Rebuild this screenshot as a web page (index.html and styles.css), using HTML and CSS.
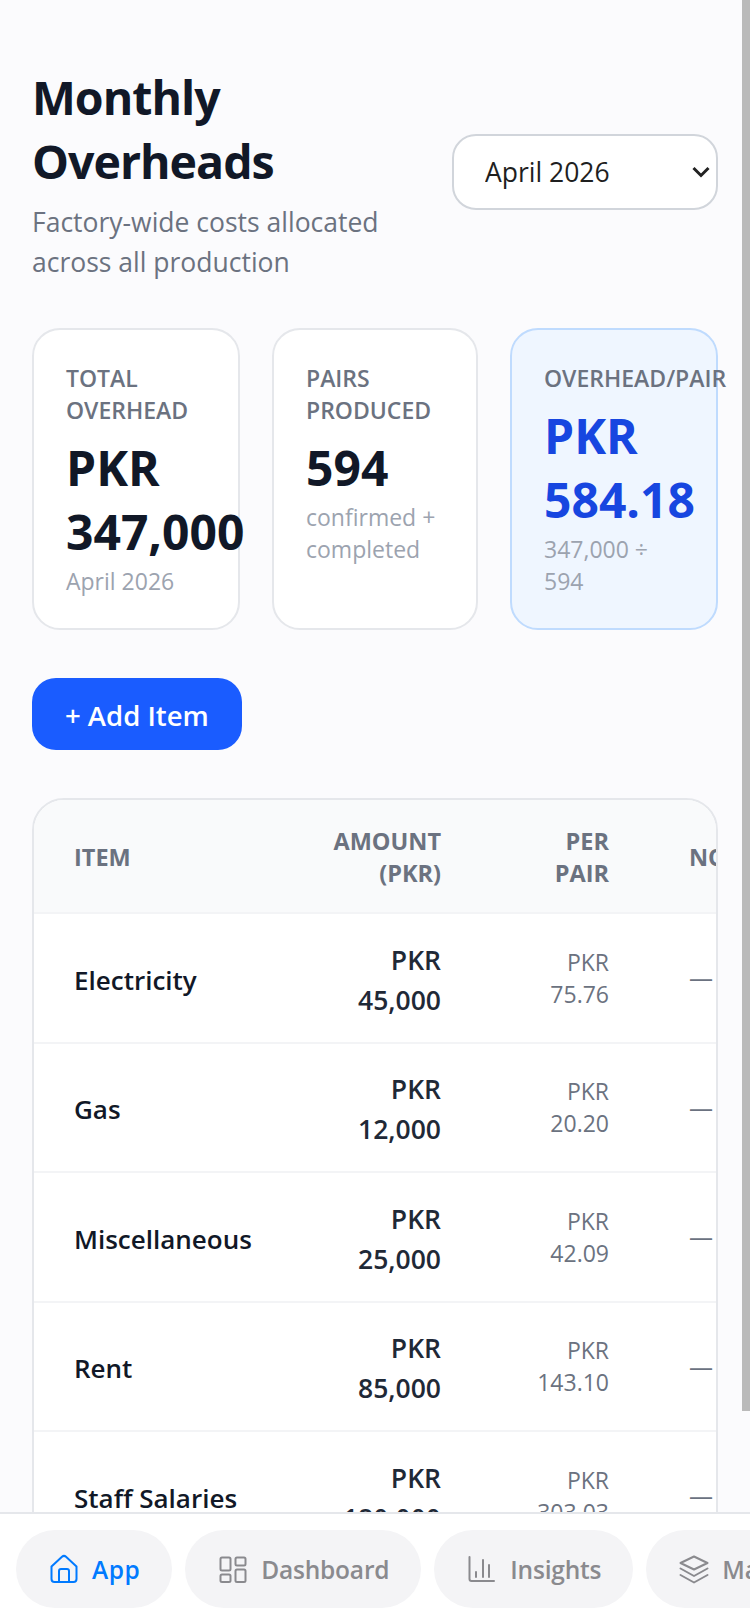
FILE: index.html
```html
<!DOCTYPE html>
<html lang="en">
<head>
  <meta charset="UTF-8" />
  <meta name="viewport" content="width=device-width, initial-scale=1" />
  <title>Monthly Overheads</title>
  <link rel="stylesheet" href="styles.css">
</head>
<body>

  <main class="page">
    <header class="page-head">
      <div class="page-title">
        <h1>Monthly Overheads</h1>
        <p>Factory-wide costs allocated across all production</p>
      </div>
      <select class="month-select">
        <option>April 2026</option>
        <option>March 2026</option>
      </select>
    </header>

    <section class="stats">
      <div class="stat">
        <div class="stat-label">Total Overhead</div>
        <div class="stat-value">PKR 347,000</div>
        <div class="stat-sub">April 2026</div>
      </div>
      <div class="stat">
        <div class="stat-label">Pairs Produced</div>
        <div class="stat-value">594</div>
        <div class="stat-sub">confirmed + completed</div>
      </div>
      <div class="stat stat-blue">
        <div class="stat-label">Overhead/Pair</div>
        <div class="stat-value">PKR 584.18</div>
        <div class="stat-sub">347,000 ÷ 594</div>
      </div>
    </section>

    <button class="add-btn">+ Add Item</button>

    <div class="table-wrap">
      <table class="items">
        <colgroup>
          <col class="col-item" />
          <col class="col-amount" />
          <col class="col-pair" />
          <col class="col-notes" />
        </colgroup>
        <thead>
          <tr>
            <th>Item</th>
            <th class="num">Amount (PKR)</th>
            <th class="num">Per Pair</th>
            <th>Notes</th>
          </tr>
        </thead>
        <tbody>
          <tr>
            <td class="name">Electricity</td>
            <td class="num amount">PKR 45,000</td>
            <td class="num pair">PKR 75.76</td>
            <td class="notes">—</td>
          </tr>
          <tr>
            <td class="name">Gas</td>
            <td class="num amount">PKR 12,000</td>
            <td class="num pair">PKR 20.20</td>
            <td class="notes">—</td>
          </tr>
          <tr>
            <td class="name">Miscellaneous</td>
            <td class="num amount">PKR 25,000</td>
            <td class="num pair">PKR 42.09</td>
            <td class="notes">—</td>
          </tr>
          <tr>
            <td class="name">Rent</td>
            <td class="num amount">PKR 85,000</td>
            <td class="num pair">PKR 143.10</td>
            <td class="notes">—</td>
          </tr>
          <tr>
            <td class="name">Staff Salaries</td>
            <td class="num amount">PKR 180,000</td>
            <td class="num pair">PKR 303.03</td>
            <td class="notes">—</td>
          </tr>
        </tbody>
      </table>
    </div>
  </main>

  <nav class="tabbar">
    <a class="tab active">
      <svg viewBox="0 0 32 32"><path d="M3.500 13.500 14 3.800a3 3 0 0 1 4 0l10.500 9.700V26a3 3 0 0 1-3 3h-19a3 3 0 0 1-3-3z"/><path d="M11 29V18a2 2 0 0 1 2-2h6a2 2 0 0 1 2 2v11"/></svg>
      App
    </a>
    <a class="tab">
      <svg viewBox="0 0 32 32"><rect x="3.500" y="4.500" width="10" height="13" rx="1.500"/><rect x="18.500" y="4.500" width="10" height="8" rx="1.500"/><rect x="18.500" y="16.500" width="10" height="12.500" rx="1.500"/><rect x="3.500" y="21.500" width="10" height="7.500" rx="1.500"/></svg>
      Dashboard
    </a>
    <a class="tab">
      <svg viewBox="0 0 32 32"><path d="M3.500 4v22a2 2 0 0 0 2 2H28"/><path d="M10 19v5M17 7v17M23 12v12"/></svg>
      Insights
    </a>
    <a class="tab">
      <svg viewBox="0 0 32 32"><path d="M16 3.500 29.500 10 16 16.500 2.500 10z"/><path d="M2.500 15.500 16 23l13.500-7.500"/><path d="M2.500 22 16 29.500 29.500 22"/></svg>
      Materials
    </a>
  </nav>

  <div class="scroll-thumb"></div>

</body>
</html>
```

FILE: styles.css
```css
body {
  margin: 0;
  background: #fbfbfd;
  color: #111827;
  font-family: "Open Sans", "Noto Sans", sans-serif;
}

.page {
  padding: 65px 32px 308px;
}

.page-head {
  display: flex;
  align-items: center;
  justify-content: space-between;
  gap: 32px;
  margin-bottom: 46px;
}

.page-title {
  flex: 1;
  min-width: 0;
}

h1 {
  margin: 0;
  font-size: 46.500px;
  line-height: 64px;
  font-weight: 700;
  letter-spacing: -1px;
  color: #111827;
}

.page-title p {
  margin: 9px 0 0;
  font-size: 26.500px;
  line-height: 40px;
  color: #6b7280;
}

.month-select {
  flex: none;
  appearance: none;
  width: 266px;
  height: 76px;
  padding: 0 31px;
  margin-bottom: 4px;
  font: inherit;
  font-size: 26.500px;
  color: #1f1f1f;
  background: #fff url("data:image/svg+xml,%3Csvg xmlns='http://www.w3.org/2000/svg' viewBox='0 0 18 12'%3E%3Cpath d='M1.500 2 9 9.500 16.500 2' fill='none' stroke='%23222' stroke-width='3'/%3E%3C/svg%3E") no-repeat right 6px top 30px / 18px 12px;
  border: 2px solid #d1d5db;
  border-radius: 24px;
}

.stats {
  display: grid;
  grid-template-columns: 208px 206px 208px;
  gap: 32px;
  margin-bottom: 48px;
}

.stat {
  padding: 32px 32px 31px;
  background: #fff;
  border: 2px solid #e5e7eb;
  border-radius: 28px;
}

.stat-label {
  font-size: 23px;
  line-height: 32px;
  font-weight: 600;
  color: #6b7280;
  text-transform: uppercase;
}

.stat-value {
  margin-top: 10px;
  font-size: 48px;
  line-height: 64px;
  font-weight: 700;
  color: #111827;
}

.stat-sub {
  padding-top: 1px;
  font-size: 23px;
  line-height: 32px;
  color: #9ca3af;
}

.stat-blue {
  background: #eff6ff;
  border-color: #bfdbfe;
}

.stat-blue .stat-value {
  color: #1746e0;
}

.add-btn {
  display: block;
  height: 72px;
  padding: 2px 33px 0;
  margin-bottom: 48px;
  font: inherit;
  font-size: 27.500px;
  font-weight: 600;
  color: #fff;
  background: #1a5cff;
  border: none;
  border-radius: 24px;
}

.table-wrap {
  overflow: hidden;
  background: #fff;
  border: 2px solid #e5e7eb;
  border-radius: 32px;
}

.items {
  table-layout: fixed;
  width: 900px;
  border-collapse: collapse;
}

.col-item { width: 258px; }
.col-amount { width: 189px; }
.col-pair { width: 168px; }
.col-notes { width: 285px; }

.items th {
  height: 110px;
  padding: 2px 40px 0;
  font-size: 23.500px;
  line-height: 32px;
  font-weight: 700;
  text-align: left;
  color: #6b7280;
  text-transform: uppercase;
  background: #f9fafb;
  border-bottom: 2px solid #f3f4f6;
}

.items td {
  height: 123.500px;
  padding: 0 40px;
  border-bottom: 2px solid #f3f4f6;
}

.items .num {
  text-align: right;
}

.items .name {
  padding-top: 4px;
  font-size: 26px;
  font-weight: 600;
  color: #111827;
}

.items .amount {
  padding-top: 4px;
  font-size: 26.500px;
  line-height: 40px;
  font-weight: 600;
  color: #1f2937;
}

.pair {
  font-size: 23px;
  line-height: 32px;
  color: #6b7280;
}

.notes {
  font-size: 24px;
  color: #6b7280;
}

.tabbar {
  position: fixed;
  left: 0;
  right: 0;
  bottom: 0;
  display: flex;
  gap: 13px;
  height: 112px;
  box-sizing: border-box;
  padding: 16px;
  overflow: hidden;
  background: #fff;
  border-top: 2px solid #e5e7eb;
}

.tab {
  display: flex;
  flex: none;
  align-items: center;
  gap: 12px;
  height: 78px;
  padding: 0 32px;
  font-size: 24.500px;
  font-weight: 600;
  letter-spacing: -0.2px;
  color: #8a8a8e;
  background: #f4f4f6;
  border-radius: 40px;
}

.tab svg {
  width: 32px;
  height: 32px;
  fill: none;
  stroke: currentColor;
  stroke-width: 2;
  stroke-linejoin: round;
  stroke-linecap: round;
}

.tab.active {
  color: #007aff;
  letter-spacing: 0.5px;
}

/* the window's scrollbar does not show in headless mode */
.scroll-thumb {
  position: fixed;
  top: 0;
  right: 0;
  width: 8px;
  height: 1411px;
  background: #bababa;
}
```
